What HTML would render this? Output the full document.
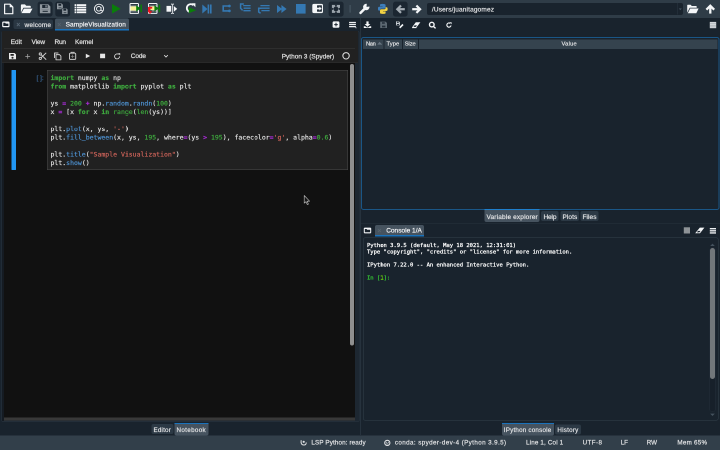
<!DOCTYPE html>
<html><head><meta charset="utf-8"><title>Spyder</title>
<style>
*{box-sizing:border-box;margin:0;padding:0}
html,body{width:720px;height:450px;overflow:hidden;background:#19232D}
#w{position:absolute;will-change:transform;-webkit-font-smoothing:antialiased;left:0;top:0;width:1440px;height:900px;transform:scale(.5);transform-origin:0 0;background:#19232D;font-family:"Liberation Sans","DejaVu Sans",sans-serif;font-size:13px;color:#E0E1E3;overflow:hidden}
.a{position:absolute}
.t{position:absolute;white-space:pre;line-height:1;-webkit-text-stroke:0.4px}
.mono{font-family:"DejaVu Sans Mono","Liberation Mono",monospace}
svg{position:absolute;overflow:visible}
.code{position:absolute;left:101px;top:147px;-webkit-text-stroke:0.3px;font-family:"DejaVu Sans Mono","Liberation Mono",monospace;font-size:13px;line-height:17px;white-space:pre;color:#e6e6e6}
.k{color:#3fae3f;font-weight:bold}.o{color:#a82bd6;font-weight:bold}.n{color:#3fae3f}.p{color:#4f95d6}.s{color:#d2655b}
.tab{position:absolute;border-radius:4px;background:#2C3945}
.tab.sel{background:#46535F}
.con{-webkit-text-stroke:0.5px;position:absolute;left:734px;top:484px;font-family:"DejaVu Sans Mono","Liberation Mono",monospace;font-size:11px;line-height:13px;white-space:pre;color:#fff}
</style></head><body>
<div id="w">
<!-- top toolbar -->
<div class="a" style="left:0;top:0;width:1440px;height:35.8px;background:#2F3C47"></div>
<!-- status bar -->
<div class="a" style="left:0;top:871px;width:1440px;height:29px;background:#323F4A"></div>

<!-- LEFT PANE : notebook -->
<div class="a" style="left:720px;top:36px;width:2px;height:834px;background:#26323D"></div>
<div class="a" style="left:3px;top:62px;width:716px;height:782px;background:#1d2731;border:1px solid #293540;border-radius:3px"></div>
<div class="a" style="left:8px;top:63px;width:702px;height:772px;background:#111"></div>
<div class="a" style="left:4px;top:62px;width:711.5px;height:64px;background:#212121"></div>
<div class="a" style="left:8px;top:835px;width:702px;height:6px;background:#383838"></div>
<div class="a" style="left:4px;top:125px;width:711.5px;height:1px;background:#303030"></div>
<div class="a" style="left:8px;top:96px;width:702px;height:1px;background:#3a3a3a"></div>
<div class="a" style="left:4px;top:126px;width:4px;height:716px;background:#151b22"></div>
<!-- left tabs -->
<div class="a" style="left:27px;top:39px;width:79px;height:19px;background:#2A3743;border-radius:4px"></div>
<div class="a" style="left:109.5px;top:37px;width:148px;height:24px;background:#43515D;border-radius:4px 4px 0 0;border-bottom:3px solid #1A72BB"></div>
<!-- cell -->
<div class="a" style="left:23px;top:140px;width:8.6px;height:200px;background:#2196F3;border-radius:1px"></div>
<div class="a" style="left:94px;top:140px;width:602px;height:200px;background:#212121;border:1px solid #4a4a4a"></div>
<div class="t" style="left:73px;top:149px;font-size:13px;color:#38628f">[ ]:</div>
<div class="code"><span class="k">import</span> numpy <span class="k">as</span> np
<span class="k">from</span> matplotlib <span class="k">import</span> pyplot <span class="k">as</span> plt

ys <span class="o">=</span> <span class="n">200</span> <span class="o">+</span> np.<span class="p">random</span>.<span class="p">randn</span>(<span class="n">100</span>)
x <span class="o">=</span> [x <span class="k">for</span> x <span class="k">in</span> <span class="n">range</span>(<span class="n">len</span>(ys))]

plt.<span class="p">plot</span>(x, ys, <span class="s">'-'</span>)
plt.<span class="p">fill_between</span>(x, ys, <span class="n">195</span>, where<span class="o">=</span>(ys <span class="o">&gt;</span> <span class="n">195</span>), facecolor<span class="o">=</span><span class="s">'g'</span>, alpha<span class="o">=</span><span class="n">0.6</span>)

plt.<span class="p">title</span>(<span class="s">"Sample Visualization"</span>)
plt.<span class="p">show</span>()</div>
<!-- nb scrollbar -->
<div class="a" style="left:700px;top:128px;width:8px;height:563px;background:#8f8f8f;border-radius:4px"></div>
<!-- left bottom tabs -->
<div class="tab" style="left:303px;top:848px;width:44px;height:20px"></div>
<div class="tab sel" style="left:349px;top:846px;width:68px;height:25px;border-top:2px solid #1A72BB;border-radius:0 0 4px 4px"></div>

<!-- RIGHT PANE -->
<!-- path box -->
<div class="a" style="left:854px;top:6px;width:512px;height:23.5px;background:#19232D;border-radius:4px"></div>
<div class="a" style="left:1355px;top:6px;width:1px;height:23px;background:#2a3642"></div>
<!-- var explorer table -->
<div class="a" style="left:722px;top:74px;width:717px;height:346px;background:#19232D;border:2px solid #1A5686;border-radius:5px"></div>
<div class="a" style="left:726px;top:79px;width:41px;height:18.5px;background:#35434E"></div>
<div class="a" style="left:769px;top:79px;width:35px;height:18.5px;background:#35434E"></div>
<div class="a" style="left:806px;top:79px;width:30px;height:18.5px;background:#35434E"></div>
<div class="a" style="left:838px;top:79px;width:597px;height:18.5px;background:#35434E"></div>
<!-- middle tabs -->
<div class="tab sel" style="left:969px;top:418px;width:110px;height:26px;border-top:2px solid #1F7FCC;border-radius:0 0 4px 4px"></div>
<div class="tab" style="left:1082px;top:422px;width:35px;height:20px"></div>
<div class="tab" style="left:1121px;top:422px;width:37px;height:20px"></div>
<div class="tab" style="left:1161px;top:422px;width:36px;height:20px"></div>
<!-- separator between var explorer and console -->
<div class="a" style="left:721px;top:446px;width:719px;height:1px;background:#26323d"></div>
<!-- console tab -->
<div class="a" style="left:750px;top:450px;width:98px;height:23px;background:#46535F;border-radius:4px 4px 0 0;border-bottom:3px solid #1A72BB"></div>
<!-- console -->
<div class="a" style="left:726px;top:475px;width:711px;height:366px;background:#19232D;border:1px solid #32414B;border-radius:4px"></div>
<div class="con">Python 3.9.5 (default, May 18 2021, 12:31:01)
Type "copyright", "credits" or "license" for more information.

IPython 7.22.0 -- An enhanced Interactive Python.

<span style="color:#35c535">In [</span><span style="color:#7CFC00">1</span><span style="color:#35c535">]:</span></div>
<div class="a" style="left:1419px;top:495px;width:12px;height:329px;border:1px solid #222d38;background:#17202a;border-radius:5px"></div>
<div class="a" style="left:1420px;top:496px;width:10px;height:262px;background:#72777B;border-radius:5px"></div>
<!-- bottom right tabs -->
<div class="tab sel" style="left:1004px;top:846px;width:104px;height:25px;border-top:2px solid #1A72BB;border-radius:0 0 4px 4px"></div>
<div class="tab" style="left:1110px;top:849px;width:52px;height:20px"></div>

<!-- labels -->
<div class="t" style="left:49.0px;top:42.8px;font-size:13px;letter-spacing:0.30px;color:#E0E1E3;">welcome</div>
<div class="t" style="left:131.2px;top:42.0px;font-size:13px;letter-spacing:0.21px;color:#F2F3F5;">SampleVisualization</div>
<div class="t" style="left:32.6px;top:42.3px;font-size:14px;letter-spacing:-1.18px;color:#5f6e7c;">×</div>
<div class="t" style="left:114.4px;top:41.9px;font-size:14px;letter-spacing:-0.98px;color:#56636f;">×</div>
<div class="t" style="left:21.4px;top:77.0px;font-size:13px;letter-spacing:0.05px;color:#e0e0e0;">Edit</div>
<div class="t" style="left:63.0px;top:77.0px;font-size:13px;letter-spacing:-0.24px;color:#e0e0e0;">View</div>
<div class="t" style="left:109.0px;top:77.0px;font-size:13px;letter-spacing:-0.42px;color:#e0e0e0;">Run</div>
<div class="t" style="left:150.0px;top:77.0px;font-size:13px;letter-spacing:-0.26px;color:#e0e0e0;">Kernel</div>
<div class="t" style="left:261.6px;top:105.4px;font-size:13px;letter-spacing:-0.27px;color:#e0e0e0;">Code</div>
<div class="t" style="left:563.4px;top:106.0px;font-size:13px;letter-spacing:0.01px;color:#e0e0e0;">Python 3 (Spyder)</div>
<div class="t" style="left:307.0px;top:853.9px;font-size:12.5px;letter-spacing:0.39px;color:#E0E1E3;">Editor</div>
<div class="t" style="left:353.0px;top:853.9px;font-size:12.5px;letter-spacing:0.69px;color:#E0E1E3;">Notebook</div>
<div class="t" style="left:863.8px;top:12.2px;font-size:13px;letter-spacing:0.32px;color:#E0E1E3;">/Users/juanitagomez</div>
<div class="t" style="left:732.0px;top:81.6px;font-size:11.5px;letter-spacing:-0.77px;color:#E0E1E3;">Nan</div>
<div class="t" style="left:773.0px;top:81.6px;font-size:11.5px;letter-spacing:0.17px;color:#E0E1E3;">Type</div>
<div class="t" style="left:809.6px;top:81.6px;font-size:11.5px;letter-spacing:-0.19px;color:#E0E1E3;">Size</div>
<div class="t" style="left:1123.0px;top:81.6px;font-size:11.5px;letter-spacing:0.49px;color:#E0E1E3;">Value</div>
<div class="t" style="left:973.0px;top:427.2px;font-size:13px;letter-spacing:0.32px;color:#E0E1E3;">Variable explorer</div>
<div class="t" style="left:1087.0px;top:426.6px;font-size:13px;letter-spacing:-0.28px;color:#E0E1E3;">Help</div>
<div class="t" style="left:1125.0px;top:426.6px;font-size:13px;letter-spacing:0.14px;color:#E0E1E3;">Plots</div>
<div class="t" style="left:1165.0px;top:426.6px;font-size:13px;letter-spacing:0.11px;color:#E0E1E3;">Files</div>
<div class="t" style="left:772.4px;top:454.4px;font-size:13px;letter-spacing:0.05px;color:#F2F3F5;">Console 1/A</div>
<div class="t" style="left:754.8px;top:454.3px;font-size:14px;letter-spacing:-0.98px;color:#596671;">×</div>
<div class="t" style="left:1007.6px;top:854.1px;font-size:12.5px;letter-spacing:0.42px;color:#E0E1E3;">IPython console</div>
<div class="t" style="left:1114.8px;top:853.7px;font-size:12.5px;letter-spacing:0.47px;color:#E0E1E3;">History</div>
<div class="t" style="left:622.8px;top:878.7px;font-size:12.5px;letter-spacing:0.28px;color:#E0E1E3;">LSP Python: ready</div>
<div class="t" style="left:789.8px;top:878.7px;font-size:12.5px;letter-spacing:0.80px;color:#E0E1E3;">conda: spyder-dev-4 (Python 3.9.5)</div>
<div class="t" style="left:1052.0px;top:878.7px;font-size:12.5px;letter-spacing:0.34px;color:#E0E1E3;">Line 1, Col 1</div>
<div class="t" style="left:1165.2px;top:878.7px;font-size:12.5px;letter-spacing:0.84px;color:#E0E1E3;">UTF-8</div>
<div class="t" style="left:1241.6px;top:878.7px;font-size:12.5px;letter-spacing:-0.29px;color:#E0E1E3;">LF</div>
<div class="t" style="left:1293.6px;top:878.7px;font-size:12.5px;letter-spacing:-0.20px;color:#E0E1E3;">RW</div>
<div class="t" style="left:1354.8px;top:878.7px;font-size:12.5px;letter-spacing:0.50px;color:#E0E1E3;">Mem 65%</div>
<!-- icons -->
<svg style="left:0;top:0" width="1440" height="900" viewBox="0 0 720 450" fill="none">
<!-- ===== main toolbar ===== -->
<g id="i-new" stroke="#F4F6F8" stroke-width="1.2" stroke-linejoin="round">
<path d="M4.6 4.2H10L12.8 7V13.7H4.6Z"/><path d="M10 4.2V7H12.8Z" fill="#F4F6F8" stroke-width="0.6"/></g>
<g id="i-open" fill="#F4F6F8">
<path d="M20.9 5.2Q20.9 4.4 21.7 4.4H25L26.2 5.8H30Q30.8 5.8 30.8 6.6V7.8H23.4L20.9 12.6Z"/>
<path d="M23.9 8.6H32.5L30 13.1H21.4Z"/></g>
<rect x="37.6" y="1.6" width="15" height="15" rx="2.5" fill="#1B2631"/>
<g id="i-save"><path d="M39.9 4.3H48.2L50.4 6.5V13.3H39.9Z" fill="#8F979E"/>
<path d="M42.2 4.9H47.6V8H42.2Z" fill="#1B2631"/><rect x="45.4" y="5.3" width="1.3" height="2.2" fill="#8F979E"/><rect x="42.6" y="10.8" width="5.2" height="1" fill="#1B2631"/><rect x="41.6" y="9.2" width="7.2" height="0.5" fill="#6F7880"/></g>
<rect x="55.3" y="1.6" width="14.8" height="15" rx="2.5" fill="#1B2631"/>
<g id="i-saveall">
<path d="M57 3.4H61.5L62.9 4.8V9.2H57Z" fill="#8F979E"/><path d="M58.4 3.9H61.2V5.8H58.4Z" fill="#1B2631"/><rect x="58.6" y="7.5" width="2.8" height="0.7" fill="#1B2631"/>
<path d="M61.9 8.2H66.5L67.9 9.6V14.2H61.9Z" fill="#8F979E" stroke="#1B2631" stroke-width="0.5"/><path d="M63.4 8.8H66.2V10.7H63.4Z" fill="#1B2631"/><rect x="63.6" y="12.4" width="2.8" height="0.7" fill="#1B2631"/></g>
<g id="i-list" fill="#F4F6F8">
<rect x="74.6" y="4.2" width="1.4" height="1.8"/><rect x="76.6" y="4.2" width="9.6" height="1.8"/>
<rect x="74.6" y="6.6" width="1.4" height="1.8"/><rect x="76.6" y="6.6" width="9.6" height="1.8"/>
<rect x="74.6" y="9" width="1.4" height="1.8"/><rect x="76.6" y="9" width="9.6" height="1.8"/>
<rect x="74.6" y="11.4" width="1.4" height="1.8"/><rect x="76.6" y="11.4" width="9.6" height="1.8"/></g>
<g id="i-at" stroke="#F4F6F8" stroke-width="0.9">
<circle cx="99" cy="8.8" r="4.6"/><circle cx="98.8" cy="8.8" r="2.3"/><path d="M101 7V10.4Q101.6 11.2 102.6 10.4"/></g>
<path id="i-run" d="M112 4L120.6 8.8L112 13.6Z" fill="#0A7D0A"/>
<g id="i-runcell">
<rect x="130" y="3.5" width="8.5" height="9.9" rx="0.8" stroke="#F4F6F8" stroke-width="1"/>
<path d="M130 6H138.5M130 11H138.5" stroke="#F4F6F8" stroke-width="0.6"/>
<rect x="130.5" y="6.4" width="6" height="4.2" fill="#F5F193"/>
<path d="M136.2 5.2L140.6 8.4L136.2 11.6Z" fill="#0A7D0A"/><rect x="140.4" y="4.6" width="1.6" height="7.6" fill="#0A7D0A"/></g>
<g id="i-runcelladv">
<rect x="148.5" y="3.5" width="8.5" height="9.9" rx="0.8" stroke="#F4F6F8" stroke-width="1"/>
<path d="M148.5 6H157M152 11H157" stroke="#F4F6F8" stroke-width="0.6"/>
<rect x="150.4" y="6.4" width="4.2" height="3.8" fill="#F5F193"/>
<path d="M152.2 6.9H148V11.3H147.6L150 14L152.4 11.3H150.2V8.6H152.2Z" fill="#F0141E"/>
<path d="M154.4 5.2L158.8 8.4L154.4 11.6Z" fill="#0A7D0A"/><rect x="158.6" y="4.6" width="1.6" height="7.6" fill="#0A7D0A"/></g>
<g id="i-runsel">
<rect x="166.5" y="5.9" width="4.7" height="5.8" fill="#F4F6F8"/>
<path d="M171 4.1Q172.3 4.1 172.5 4.9Q172.7 4.1 174 4.1M171 13.5Q172.3 13.5 172.5 12.7Q172.7 13.5 174 13.5M172.5 4.9V12.7" stroke="#C8CDD2" stroke-width="1.1"/>
<path d="M173.8 6L177.2 8.85L173.8 11.7Z" fill="#F4F6F8"/></g>
<g id="i-rerun">
<path d="M190.2 11.9A3.9 3.9 0 1 1 193.4 5.2" stroke="#F4F6F8" stroke-width="1.8"/>
<path d="M191.6 3.3H195.4V7.3Z" fill="#F4F6F8"/>
<path d="M188.8 7.2L196.1 10.2L188.8 13.3Z" fill="#0A7D0A"/></g>
<g id="i-debug" fill="#3478B2">
<path d="M202.3 4.5L207.5 9L202.3 13.5Z"/><rect x="207.6" y="4.5" width="1.6" height="9"/><rect x="210" y="4.5" width="1.6" height="9"/></g>
<g id="i-step"><path d="M229 6H223.2V10.9H229" stroke="#3478B2" stroke-width="1.6"/>
<circle cx="229.4" cy="6" r="1.35" fill="#3478B2"/><circle cx="229.4" cy="10.9" r="1.35" fill="#3478B2"/></g>
<g id="i-stepin" stroke="#3478B2" stroke-width="1.3">
<path d="M243.2 5.6H250.6M243.6 8.2H250.6M243.4 10.7H250.6"/><path d="M243.8 4H240.6V8.2L242.6 10.4" stroke-width="1.5"/></g>
<g id="i-stepout" stroke="#3478B2" stroke-width="1.3">
<path d="M260.4 5.6H269.6M261 8.2H269.6M261.4 10.6H269.6"/><path d="M261.4 8.2H258.7V12L260.6 13.3" stroke-width="1.5"/></g>
<g id="i-cont" fill="#3478B2"><path d="M277 5L282.2 9L277 13Z"/><path d="M281.4 5L286.6 9L281.4 13Z"/></g>
<rect id="i-stop" x="296" y="4" width="9.6" height="9.6" fill="#3478B2"/>
<g id="i-max"><rect x="312.3" y="3.9" width="10.7" height="9.2" rx="1.6" fill="#F4F6F8"/>
<rect x="317" y="5.3" width="4.9" height="6.5" rx="0.5" fill="#27323C"/><path d="M316.5 8.55H320" stroke="#F4F6F8" stroke-width="1.7"/><path d="M319.4 6.5L321.6 8.55L319.4 10.6Z" fill="#F4F6F8"/></g>
<rect x="328.6" y="1.6" width="15" height="15" rx="2.5" fill="#1B2631"/>
<g id="i-full">
<rect x="331.9" y="4.9" width="8.1" height="8" fill="#9AA3AB"/>
<path d="M334.7 4.9H337.2L335.95 6.9ZM334.7 12.9H337.2L335.95 10.9ZM331.9 7.6V10.2L333.9 8.9ZM340 7.6V10.2L338 8.9Z" fill="#1B2631"/>
<circle cx="335.95" cy="8.9" r="2.4" fill="#1B2631"/></g>
<rect x="349.6" y="5" width="1" height="7.6" fill="#4A5A66"/>
<g id="i-wrench"><path d="M360.5 12.9L365 8.4" stroke="#F4F6F8" stroke-width="2.5" stroke-linecap="round"/>
<circle cx="366.3" cy="7" r="3.2" fill="#F4F6F8"/><path d="M366.5 6.9L366.9 2.6L370.8 6.4Z" fill="#2F3C47"/></g>
<g id="i-python">
<path d="M380.3 4.2Q382.8 3.6 385 4.2Q385.6 4.5 385.6 5.2V7.4Q385.6 8.6 384.4 8.6H381.2Q380 8.6 380 9.9V10.6H378.9Q378 10.6 378 9.3V8Q378 6.8 379.2 6.8H382.6V6.4H380V5Q380 4.4 380.3 4.2Z" fill="#3D7EBB"/>
<path d="M385.3 13.6Q382.8 14.2 380.6 13.6Q380 13.3 380 12.6V10.4Q380 9.2 381.2 9.2H384.4Q385.6 9.2 385.6 7.9V7.2H386.7Q387.6 7.2 387.6 8.5V9.8Q387.6 11 386.4 11H383V11.4H385.6V12.8Q385.6 13.4 385.3 13.6Z" fill="#F2D242"/></g>
<rect x="393" y="1.6" width="14.6" height="15" rx="2.5" fill="#1B2631"/>
<g id="i-back" stroke="#A4ACB3" stroke-width="2.2"><path d="M404.8 9.2H398"/><path d="M401 5.5L397.3 9.2L401 12.9"/></g>
<g id="i-fwd" stroke="#F4F6F8" stroke-width="2.2"><path d="M412.2 9.2H419.4"/><path d="M416.4 5.5L420.1 9.2L416.4 12.9"/></g>
<path d="M678.8 8.4H681.8L680.3 10.2Z" fill="#44525E"/>
<g id="i-open2" fill="#F4F6F8">
<path d="M687.2 5.4Q687.2 4.7 687.9 4.7H690.6L691.8 6H696Q696.7 6 696.7 6.7V7.7H689.7L687.2 12.6Z"/>
<path d="M690.2 8.5H698.6L696.3 13.2H687.8Z"/></g>
<g id="i-up" stroke="#F4F6F8" stroke-width="2.3"><path d="M710.3 13.6V6.6"/><path d="M706.4 9.7L710.3 5.8L714.2 9.7"/></g>
<!-- ===== left pane tab bar ===== -->
<g id="i-browse1"><rect x="2.2" y="21.5" width="7.3" height="5.7" rx="1.1" fill="#F4F6F8"/><path d="M3.3 22.8H5.2L5.8 23.6H8.4V26H3.3Z" fill="#19232D"/></g>
<g id="i-plus"><rect x="332.6" y="21.4" width="6.8" height="6.4" rx="1.2" fill="#F4F6F8"/><path d="M336 22.8V26.4M334.2 24.6H337.8" stroke="#19232D" stroke-width="1"/></g>
<g id="i-ham1"><path d="M349.1 22.5H355.9M349.1 24.55H355.9M349.1 26.6H355.9" stroke="#EEF0F2" stroke-width="1.25"/><path d="M354.6 27.2H356.6L356.2 28.6Z" fill="#AEB6BD"/></g>
<!-- ===== notebook toolbar ===== -->
<g id="i-nbsave" fill="#EAEAEA"><path d="M9 53H14.6L16 54.4V59.2H9ZM10.5 54V55.7H13.8V54ZM12.5 56.7A1.05 1.05 0 1 0 12.5 58.8A1.05 1.05 0 1 0 12.5 56.7Z" fill-rule="evenodd"/></g>
<path d="M27.7 54V58.7M25.3 56.35H30.1" stroke="#A8A8A8" stroke-width="0.75"/>
<g id="i-cut" stroke="#D0D0D0" stroke-width="0.95"><circle cx="40.3" cy="54" r="1.1"/><circle cx="40.3" cy="58.4" r="1.1"/><path d="M41.2 54.8L46.2 59.6M41.2 57.6L46.2 52.8"/></g>
<g id="i-copy" stroke="#CCCCCC" stroke-width="0.95" stroke-linejoin="round"><path d="M56 54.6H59.4L60.9 56.1V59.8H56Z"/><path d="M54.5 58V53H58.4"/></g>
<g id="i-paste" stroke="#CCCCCC" stroke-width="0.95"><rect x="69.5" y="53.2" width="6.2" height="6.2" rx="0.9"/><path d="M71.1 53.2V52.3H74.1V53.2" /><path d="M72.6 54.6V58M70.9 56.3H74.3" stroke-width="0.7" stroke="#8a8a8a"/></g>
<path d="M85.8 53.7L90.2 56L85.8 58.3Z" fill="#E6E6E6"/>
<rect x="100.1" y="53.7" width="5" height="4.5" fill="#E6E6E6"/>
<g id="i-nbrefresh"><path d="M119.6 56.4A2.5 2.5 0 1 1 118.6 54.4" stroke="#E6E6E6" stroke-width="0.8"/><path d="M118 53.2H120.2V55.4Z" fill="#E6E6E6"/></g>
<path d="M164.2 55.2L166 57L167.8 55.2" stroke="#E6E6E6" stroke-width="0.8"/>
<circle cx="346.05" cy="55.8" r="3.2" stroke="#E0E0E0" stroke-width="1.05"/>
<!-- ===== variable explorer toolbar ===== -->
<g id="i-dl" fill="#F4F6F8"><path d="M366.4 21.4H368.6V24H370.4L367.5 26.8L364.6 24H366.4Z"/><path d="M363.8 26.2H365.2L366.6 27.4H368.4L369.8 26.2H371.2V28H363.8Z"/></g>
<g id="i-vsave"><path d="M380.2 21.6H385.6L387 23V28H380.2Z" fill="#5C6872"/><path d="M381.8 22.2V23.8H384.8V22.2ZM381.8 25.6H385.4V27.4H381.8Z" fill="#222D38"/></g>
<g id="i-vsaveas"><path d="M396 21.4H399L399.9 22.3V25.4H396Z" fill="#C9CED3"/><path d="M396.9 21.8V22.9H398.7V21.8ZM396.9 24H399V25H396.9Z" fill="#25303B"/><path d="M399.7 27.8L403 24.5" stroke="#F4F6F8" stroke-width="1.6"/></g>
<g id="i-eraser"><path d="M415.8 22.2H420.4L416.6 27.2L416.4 28.1H412L412.2 27.1Z" fill="#F4F6F8"/><path d="M413.4 26.9L414.5 25.4H417L415.9 26.9Z" fill="#19232D"/></g>
<g id="i-search" stroke="#F4F6F8"><circle cx="431.8" cy="24.6" r="2.3" stroke-width="1.4"/><path d="M433.4 26.4L435.6 28.4" stroke-width="1.4"/></g>
<g id="i-vrefresh"><path d="M451 25.4A2.1 2.1 0 1 1 450.2 23.4" stroke="#F4F6F8" stroke-width="1.1"/><path d="M449.6 22.2H451.6V24.4Z" fill="#F4F6F8"/></g>
<g id="i-ham2"><rect x="709.8" y="21.9" width="6.4" height="6.3" fill="#D2D6DA"/><path d="M709.8 23.7H716.2M709.8 25.3H716.2M709.8 26.9H716.2" stroke="#8E969D" stroke-width="0.35"/></g>
<path d="M377.2 44.6L379.6 41.8L382 44.6Z" fill="#66737F"/>
<!-- ===== console tab bar ===== -->
<g id="i-browse2"><rect x="363.8" y="227.6" width="7.4" height="5.8" rx="1" fill="#F4F6F8"/><path d="M364.8 229H366.6L367.2 229.8H370.2V232.2H364.8Z" fill="#19232D"/></g>
<rect x="683.8" y="227.3" width="6.2" height="6.2" fill="#8E9397"/>
<g id="i-eraser2"><path d="M699.8 227.6H704.4L700 233.2H695.2Z" fill="#F4F6F8"/><path d="M696.8 232.4L698 230.9H700.6L699.4 232.4Z" fill="#19232D"/></g>
<g id="i-ham3" stroke="#EEF0F2" stroke-width="1.4"><path d="M709.8 228.7H716M709.8 230.8H716M709.8 232.9H716"/></g>
<path d="M710.2 246L712.5 243.6L714.8 246Z" fill="#44515D"/>
<path d="M710.2 413.6L712.5 416L714.8 413.6Z" fill="#44515D"/>
<!-- ===== status bar ===== -->
<g id="i-lsp" stroke="#E0E1E3" stroke-width="1"><path d="M301.2 440.2Q300.4 445 303.8 445Q306.4 445 306.2 442.4"/><circle cx="303.7" cy="441.8" r="0.6" fill="#E0E1E3"/></g>
<g id="i-conda"><circle cx="387.3" cy="442.9" r="2.6" stroke="#E0E1E3" stroke-width="1.1"/><circle cx="386.3" cy="442.3" r="0.55" fill="#E0E1E3"/><circle cx="388.3" cy="442.3" r="0.55" fill="#E0E1E3"/><path d="M386.2 443.9H388.4" stroke="#E0E1E3" stroke-width="0.7"/></g>
<!-- mouse cursor -->
<path d="M304.2 195.5V203.2L306 201.6L307.3 204.6L308.4 204.1L307.2 201.2H309.6Z" fill="#161616" stroke="#C4C4C4" stroke-width="0.6" stroke-linejoin="round"/>
</svg>

</div>
</body></html>
